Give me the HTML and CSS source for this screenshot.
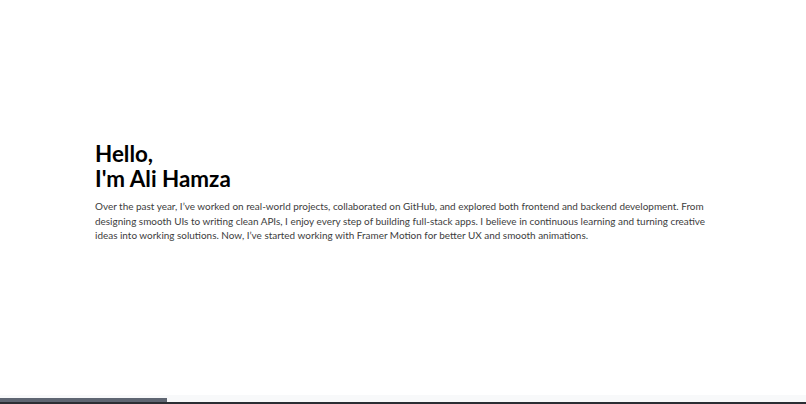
FILE: index.html
```html
<!DOCTYPE html>
<html lang="en">
<head>
<meta charset="utf-8">
<title>Ali Hamza</title>
<link rel="stylesheet" href="styles.css">
</head>
<body>
<div class="page">
  <main class="hero">
    <section class="intro">
      <h1 class="title">Hello,<br>I'm Ali Hamza</h1>
      <p class="bio">Over the past year, I’ve worked on real-world projects, collaborated on GitHub, and explored both frontend and backend development. From designing smooth UIs to writing clean APIs, I enjoy every step of building full-stack apps. I believe in continuous learning and turning creative ideas into working solutions. Now, I’ve started working with Framer Motion for better UX and smooth animations.</p>
    </section>
  </main>
  <div class="bottom">
    <div class="track"><div class="thumb"></div></div>
    <div class="line"></div>
  </div>
</div>
</body>
</html>
```
FILE: styles.css
```css
html, body {
  margin: 0;
  padding: 0;
  background: #ffffff;
}
.page {
  height: 404px;
  display: flex;
  flex-direction: column;
}
.hero {
  flex: 1;
  display: flex;
  align-items: flex-start;
  padding: 141px 0 0 95px;
}
.intro {
  width: 617px;
}
.title {
  margin: 0;
  font-family: "Lato", "Noto Sans", sans-serif;
  font-weight: 700;
  font-size: 22.4px;
  line-height: 25px;
  color: #000000;
}
.bio {
  margin: 8px 0 0;
  font-family: "Lato", "Noto Sans", sans-serif;
  font-size: 9.95px;
  line-height: 14.6px;
  color: #3d3d3d;
}
.bottom {
  height: 9px;
  display: flex;
  flex-direction: column;
  background: #f8f9fa;
}
.track {
  flex: 1;
  display: flex;
  align-items: flex-end;
}
.thumb {
  width: 167px;
  height: 4px;
  background: #5f6672;
}
.line {
  height: 2px;
  background: #2b2e33;
}
```
